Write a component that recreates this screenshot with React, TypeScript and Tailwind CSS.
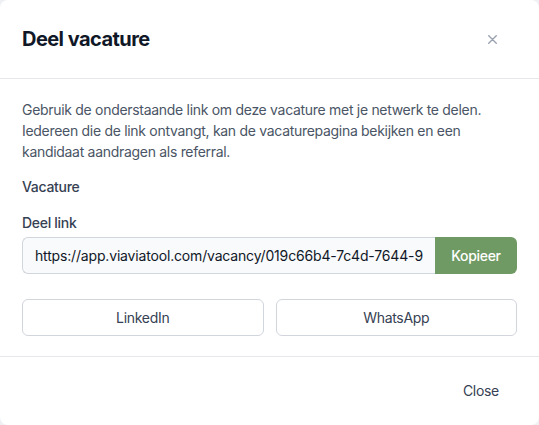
const SHARE_URL =
  'https://app.viaviatool.com/vacancy/019c66b4-7c4d-7644-9a3e-5b2f8c1d4e70'

export default function App() {
  return (
    <div className="min-h-screen bg-[#eef0f3] font-['Inter',sans-serif] tracking-[-0.3px]">
      <div className="flex h-[425px] w-[539px] flex-col rounded-lg bg-white">
        <div className="flex h-[79px] items-center justify-between border-b border-gray-200 pl-[22px] pr-[42px]">
          <h2 className="text-xl font-bold tracking-[-0.55px] text-gray-900">Deel vacature</h2>
          <button type="button" className="text-gray-400" aria-label="Sluiten">
            <svg width="9" height="9" viewBox="0 0 9 9" fill="none">
              <path d="M0.75 0.75 8.25 8.25M8.25 0.75 0.75 8.25" stroke="currentColor" strokeWidth="1.4" strokeLinecap="round" />
            </svg>
          </button>
        </div>

        <div className="px-[22px] pt-[20px] pb-5">
          <p className="text-sm leading-[21px] text-gray-600">
            Gebruik de onderstaande link om deze vacature met je netwerk te delen. Iedereen die de
            link ontvangt, kan de vacaturepagina bekijken en een kandidaat aandragen als referral.
          </p>

          <p className="mt-[15px] text-sm font-medium text-gray-700">Vacature</p>

          <div className="mt-4">
            <label className="mb-1 block text-sm font-medium text-gray-700">Deel link</label>
            <div className="flex h-[37px]">
              <input
                readOnly
                value={SHARE_URL}
                className="min-w-0 flex-1 rounded-l-md border border-r-0 border-gray-300 bg-gray-50 px-3 text-sm tracking-[-0.17px] text-gray-900 outline-none"
              />
              <button
                type="button"
                className="w-[82px] rounded-r-md bg-[#6f9a63] text-sm font-medium text-white"
              >
                Kopieer
              </button>
            </div>
          </div>

          <div className="mt-[25px] grid grid-cols-2 gap-3">
            <button
              type="button"
              className="h-[37px] rounded-md border border-gray-300 bg-white text-sm text-gray-700"
            >
              LinkedIn
            </button>
            <button
              type="button"
              className="h-[37px] rounded-md border border-gray-300 bg-white text-sm text-gray-700"
            >
              WhatsApp
            </button>
          </div>
        </div>

        <div className="flex justify-end border-t border-gray-200 px-6 py-4">
          <button type="button" className="px-4 py-2 text-sm text-gray-700">
            Close
          </button>
        </div>
      </div>
    </div>
  )
}
